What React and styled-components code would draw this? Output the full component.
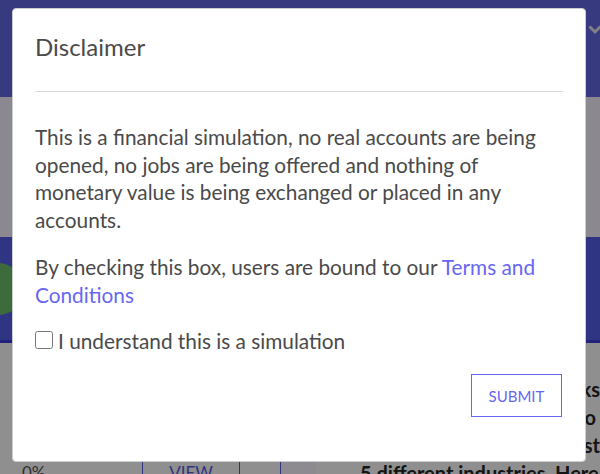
import React from 'react';
import styled, { createGlobalStyle } from 'styled-components';

const GlobalStyle = createGlobalStyle`
  html, body {
    margin: 0;
    padding: 0;
    width: 600px;
    height: 474px;
    overflow: hidden;
    font-family: Lato, "Open Sans", "Liberation Sans", sans-serif;
  }
`;

export default function App() {
  return (
    <>
      <GlobalStyle />
      <Page>
        <TopBar>
          <Chevron viewBox="0 0 14 10">
            <path d="M1.5 1.5 L7 7 L12.5 1.5" />
          </Chevron>
        </TopBar>
        <Hero />
        <Band>
          <Avatar />
        </Band>
        <Lower>
          <LeftCol>
            <TabLine />
            <Row>
              <Cell w={143}>0%</Cell>
              <Cell w={97} link center>VIEW</Cell>
              <Cell w={41} />
              <Cell w={35} shade />
            </Row>
          </LeftCol>
          <RightCol>
            <Line right>and the simulation tracks</Line>
            <Line right inset={4}>you choose where to go</Line>
            <Line right>companies to invest</Line>
            <Line>5 different industries. Here you</Line>
          </RightCol>
        </Lower>
      </Page>

      <Overlay>
        <Modal>
          <Header>
            <Title>Disclaimer</Title>
          </Header>
          <Rule />
          <Body>
            <Para>
              This is a financial simulation, no real accounts are being
              opened, no jobs are being offered and nothing of monetary value
              is being exchanged or placed in any accounts.
            </Para>
            <Para>
              By checking this box, users are bound to our{' '}
              <TermsLink href="#">Terms and Conditions</TermsLink>
            </Para>
            <CheckRow>
              <Box type="checkbox" />
              I understand this is a simulation
            </CheckRow>
          </Body>
          <Footer>
            <SubmitButton>Submit</SubmitButton>
          </Footer>
        </Modal>
      </Overlay>
    </>
  );
}

const Page = styled.div`
  width: 600px;
  height: 474px;
  background: #ffffff;
  overflow: hidden;
`;
const TopBar = styled.div`
  height: 97px;
  background: #6468e2;
  display: flex;
  justify-content: flex-end;
  align-items: flex-start;
`;
const Chevron = styled.svg`
  width: 14px;
  height: 10px;
  margin-top: 25px;
  margin-right: -2px;
  fill: none;
  stroke: #e4e4ee;
  stroke-width: 3;
`;
const Hero = styled.div`
  height: 140px;
  background: #f8f4ff;
`;
const Band = styled.div`
  height: 103px;
  background: #555ee9;
  border-bottom: 3px solid #3c3cd8;
  display: flex;
  align-items: center;
  overflow: hidden;
`;
const Avatar = styled.div`
  width: 52px;
  height: 52px;
  border-radius: 50%;
  background: #6dbf6a;
  margin-left: -28px;
`;
const Lower = styled.div`
  display: flex;
  height: 131px;
`;
const LeftCol = styled.div`
  width: 340px;
  display: flex;
  flex-direction: column;
`;
const TabLine = styled.div`
  height: 2px;
  width: 120px;
  background: #5b5be6;
  margin-top: 56px;
`;
const Row = styled.div`
  display: flex;
  margin-top: 58px;
  height: 30px;
`;
const Cell = styled.div`
  width: ${p => p.w}px;
  box-sizing: border-box;
  border-right: 1px solid ${p => (p.shade ? 'transparent' : '#5b5be6')};
  background: ${p => (p.shade ? '#fbf8ff' : 'transparent')};
  color: ${p => (p.link ? '#5b5be6' : '#555')};
  text-align: ${p => (p.center ? 'center' : 'left')};
  padding-left: ${p => (p.center ? 0 : 22)}px;
  padding-top: 5px;
  font-size: 17px;
`;
const RightCol = styled.div`
  margin-left: 20px;
  width: 240px;
  overflow: hidden;
  padding-top: 32px;
`;
const Line = styled.div`
  white-space: nowrap;
  text-align: ${p => (p.right ? 'right' : 'left')};
  direction: ${p => (p.right ? 'rtl' : 'ltr')};
  padding-right: ${p => p.inset || 0}px;
  font-size: 20px;
  line-height: 28px;
  font-weight: 700;
  color: #262626;
`;

const Overlay = styled.div`
  position: fixed;
  inset: 0;
  background: rgba(0, 0, 0, 0.44);
`;
const Modal = styled.div`
  position: absolute;
  left: 12px;
  top: 8px;
  width: 574px;
  box-sizing: border-box;
  background: #fff;
  border-radius: 4px;
  border: 1px solid #c9cfd0;
  padding: 0 22px 44px;
  color: #4a4a4a;
`;
const Header = styled.div`
  padding: 23px 0 29px;
`;
const Title = styled.h2`
  margin: 0;
  font-size: 24px;
  line-height: 30px;
  font-weight: 400;
  color: #4a4a4a;
`;
const Rule = styled.div`
  height: 1px;
  background: #d6dcdc;
`;
const Body = styled.div`
  padding-top: 31px;
`;
const Para = styled.p`
  margin: 0 0 20px;
  font-size: 20.8px;
  line-height: 27.6px;
`;
const TermsLink = styled.a`
  color: #6767f2;
  text-decoration: none;
`;
const CheckRow = styled.label`
  display: flex;
  align-items: center;
  margin-top: -2px;
  font-size: 20.8px;
  line-height: 27.6px;
`;
const Box = styled.input`
  width: 18px;
  height: 18px;
  margin: 0 5px 0 0;
`;
const Footer = styled.div`
  display: flex;
  justify-content: flex-end;
  margin-top: 20px;
`;
const SubmitButton = styled.button`
  width: 91px;
  height: 43px;
  margin-right: 1px;
  background: #fff;
  border: 1px solid #6767f2;
  color: #6767f2;
  font-family: inherit;
  font-size: 15px;
  text-transform: uppercase;
  cursor: pointer;
`;
